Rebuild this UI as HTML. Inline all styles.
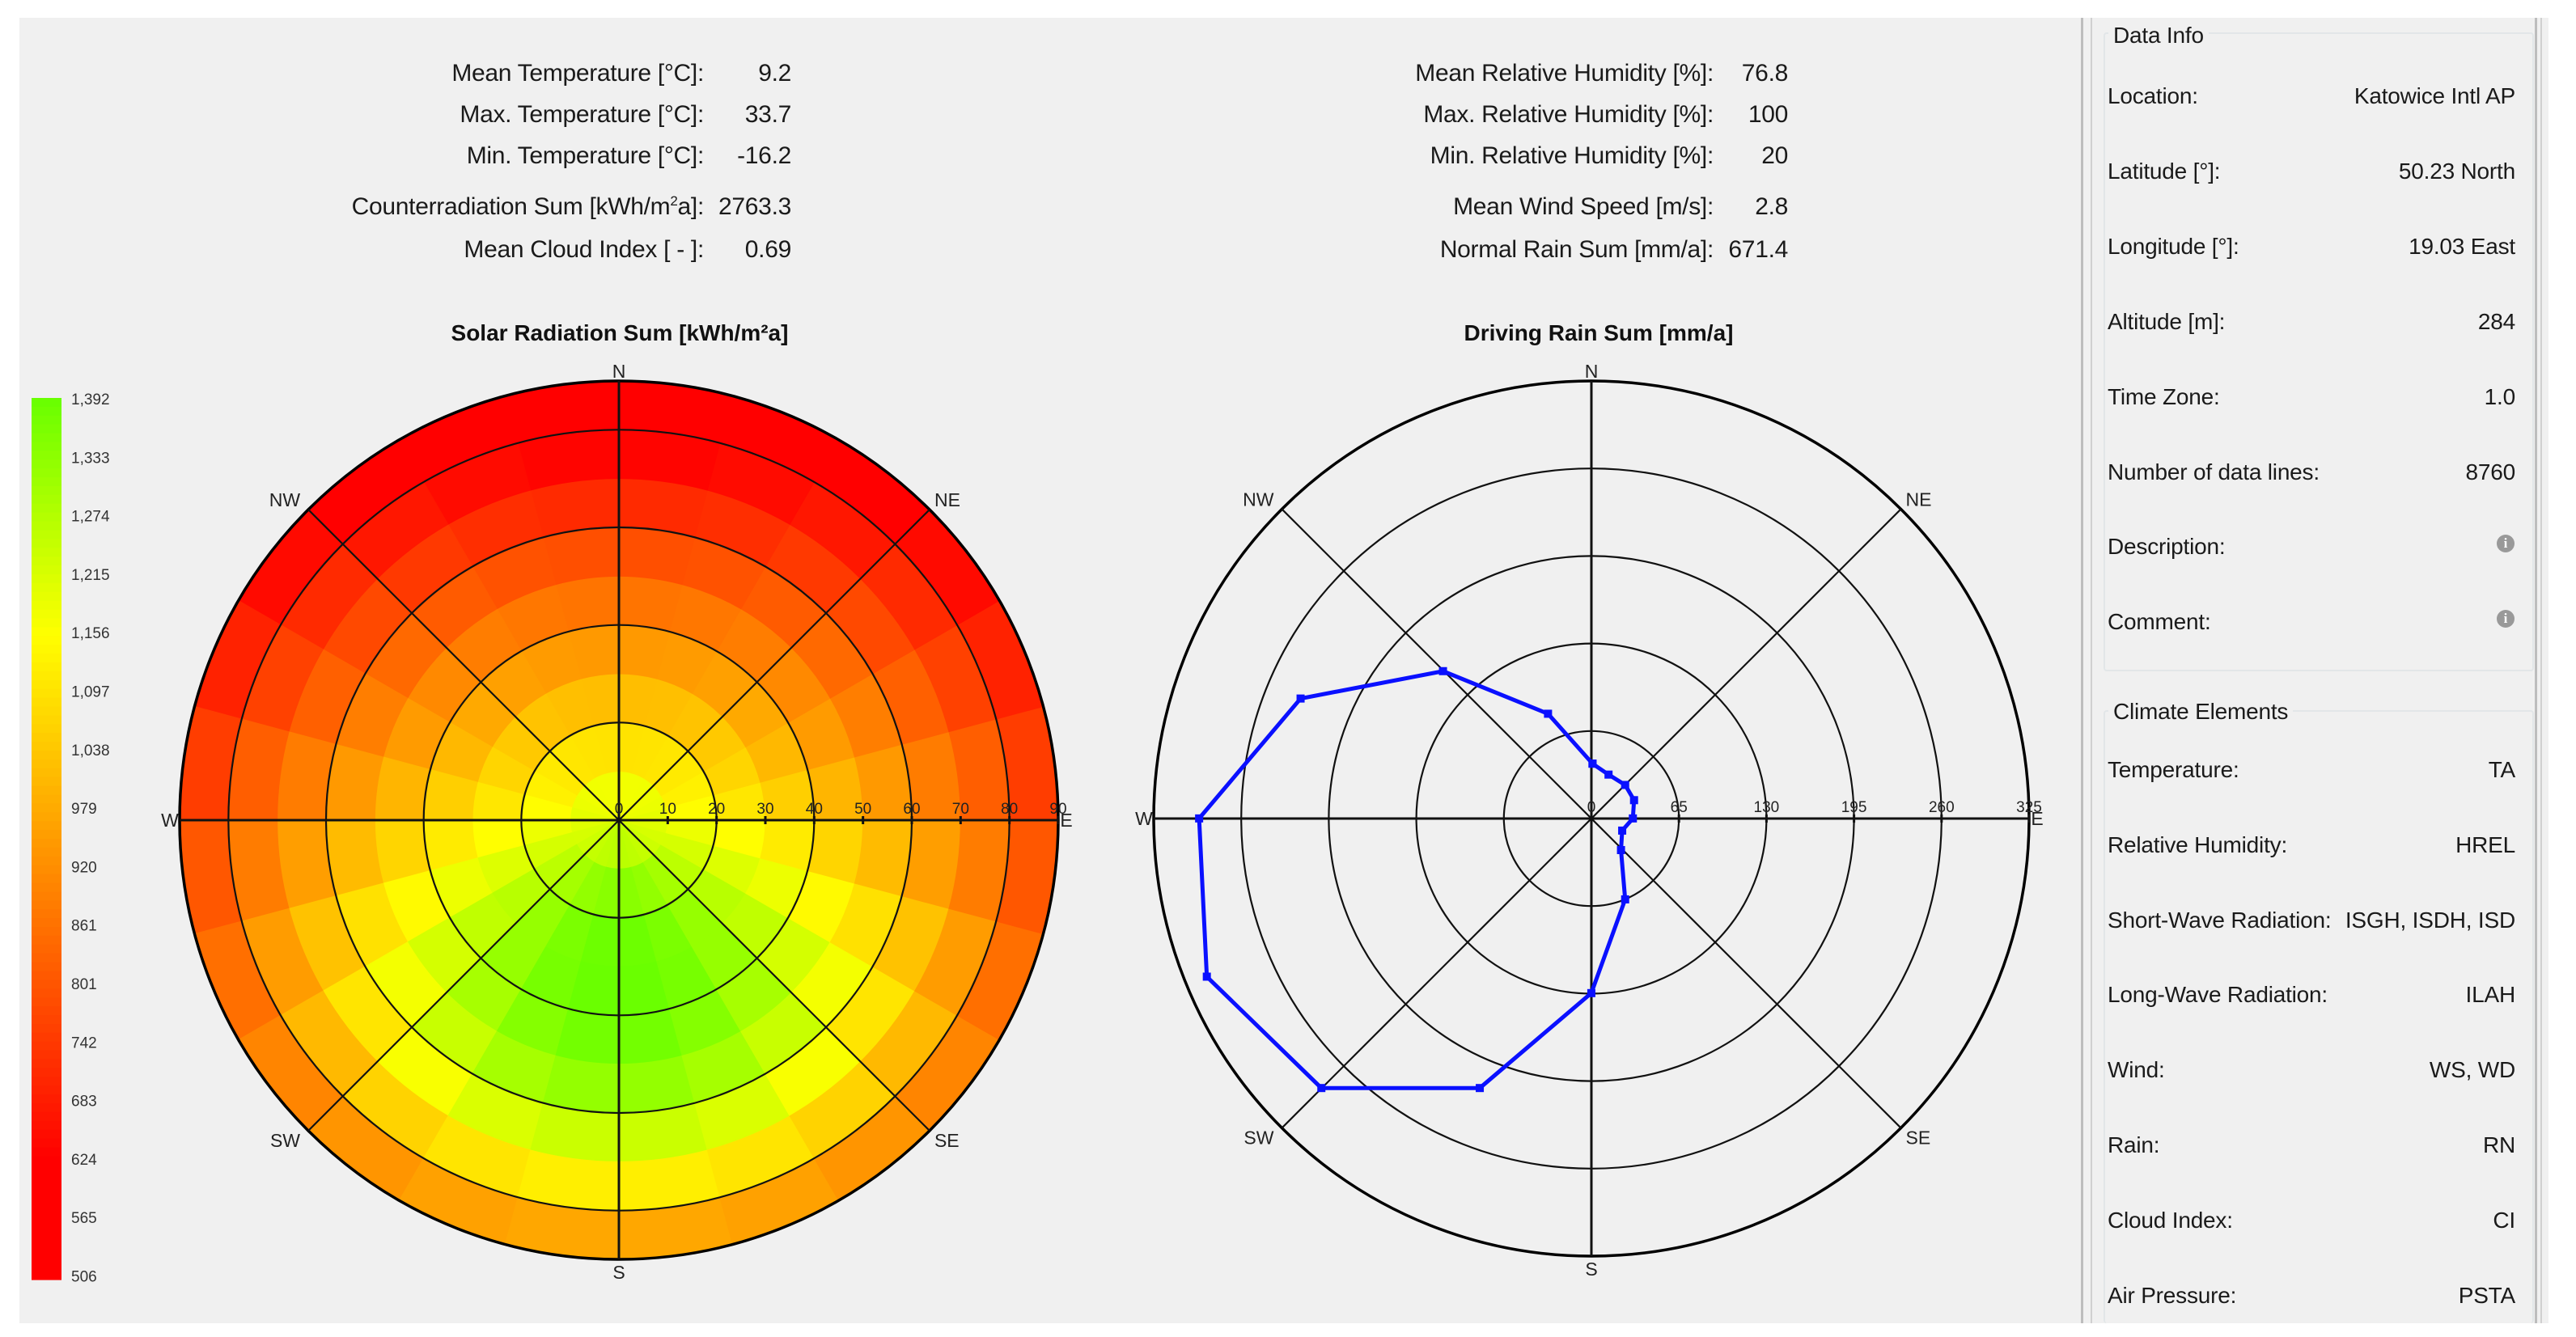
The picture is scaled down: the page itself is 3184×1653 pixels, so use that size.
<!DOCTYPE html>
<html><head><meta charset="utf-8">
<style>
html,body{margin:0;padding:0;background:#fff;}
body{width:3184px;height:1653px;position:relative;overflow:hidden;font-family:"Liberation Sans",sans-serif;color:#222;}
#panel{position:absolute;left:24px;top:22px;width:3126px;height:1614px;background:#f0f0f0;}
.st{position:absolute;font-size:30px;white-space:nowrap;letter-spacing:-0.3px;color:#1a1a1a}
.r{text-align:right}
.side{position:absolute;font-size:28px;letter-spacing:-0.2px;white-space:nowrap;color:#1a1a1a}
.vline{position:absolute;background:#bdbdbd;width:3px}
.box{position:absolute;border:2px solid #e2e6e8;border-radius:4px}
.title{position:absolute;font-weight:bold;font-size:28px;transform:translateX(-50%);white-space:nowrap;color:#111}
.info{position:absolute;width:22px;height:22px;border-radius:50%;background:#999;color:#fff;font-size:17px;font-weight:bold;text-align:center;line-height:22px;font-family:"Liberation Serif",serif}
</style></head><body>
<div id="panel"></div>
<div class="vline" style="left:2572px;top:22px;height:1614px"></div>
<div class="vline" style="left:2584px;top:22px;height:1614px;background:#d0d0d0;width:2px"></div>
<div class="vline" style="left:3133px;top:22px;height:1614px"></div>
<div class="vline" style="left:3140px;top:22px;height:1614px;background:#d0d0d0;width:2px"></div>

<div class="st r" style="right:2314px;top:74px">Mean Temperature [°C]:</div>
<div class="st r" style="right:2206px;top:74px">9.2</div>
<div class="st r" style="right:2314px;top:125px">Max. Temperature [°C]:</div>
<div class="st r" style="right:2206px;top:125px">33.7</div>
<div class="st r" style="right:2314px;top:176px">Min. Temperature [°C]:</div>
<div class="st r" style="right:2206px;top:176px">-16.2</div>
<div class="st r" style="right:2314px;top:239px">Counterradiation Sum [kWh/m<sup style="font-size:17px">2</sup>a]:</div>
<div class="st r" style="right:2206px;top:239px">2763.3</div>
<div class="st r" style="right:2314px;top:292px">Mean Cloud Index [ - ]:</div>
<div class="st r" style="right:2206px;top:292px">0.69</div>
<div class="st r" style="right:1066px;top:74px">Mean Relative Humidity [%]:</div>
<div class="st r" style="right:974px;top:74px">76.8</div>
<div class="st r" style="right:1066px;top:125px">Max. Relative Humidity [%]:</div>
<div class="st r" style="right:974px;top:125px">100</div>
<div class="st r" style="right:1066px;top:176px">Min. Relative Humidity [%]:</div>
<div class="st r" style="right:974px;top:176px">20</div>
<div class="st r" style="right:1066px;top:239px">Mean Wind Speed [m/s]:</div>
<div class="st r" style="right:974px;top:239px">2.8</div>
<div class="st r" style="right:1066px;top:292px">Normal Rain Sum [mm/a]:</div>
<div class="st r" style="right:974px;top:292px">671.4</div>

<div class="title" style="left:766px;top:396px">Solar Radiation Sum [kWh/m²a]</div>
<div class="title" style="left:1976px;top:396px">Driving Rain Sum [mm/a]</div>

<svg id="svg" width="3184" height="1653" style="position:absolute;left:0;top:0" xmlns="http://www.w3.org/2000/svg"></svg>

<div class="box" style="left:2600px;top:40px;width:528px;height:786px"></div>
<div class="side" style="left:2606px;top:28px;background:#f0f0f0;padding:0 6px">Data Info</div>
<div class="box" style="left:2600px;top:878px;width:528px;height:756px;border-bottom:none"></div>
<div class="side" style="left:2606px;top:864px;background:#f0f0f0;padding:0 6px">Climate Elements</div>
<div id="side"></div>

<script>
var NS="http://www.w3.org/2000/svg",svg=document.getElementById('svg');
function el(t,a,txt){var e=document.createElementNS(NS,t);for(var k in a)e.setAttribute(k,a[k]);if(txt!=null)e.textContent=txt;svg.appendChild(e);return e;}
function col(v){var h;if(v<=624)h=0;else if(v<1156)h=(v-624)/(1156-624)*60;else h=60+Math.min(1,(v-1156)/(1392-1156))*35;return 'hsl('+h.toFixed(1)+',100%,50%)';}
for(var i=0;i<100;i++){var v=1392-(1392-506)*i/99;el('rect',{x:39,y:492+i*10.9,width:37,height:11.5,fill:col(v)});}
var lv=['1,392','1,333','1,274','1,215','1,156','1,097','1,038','979','920','861','801','742','683','624','565','506'];
for(var i=0;i<16;i++){el('text',{x:88,y:500+i*72.3,'font-size':19,fill:'#333','font-family':'Liberation Sans'},lv[i]);}
var cx=765,cy=1014,R=543;
function val(u,A){var vS=1215+1000*u-1330*u*u,vN=1215-700*u,vE=1215-50*u-445*u*u;return vE+(vS-vN)/2*Math.cos(A)+((vS+vN)/2-vE)*Math.cos(2*A);}
var NR=9,NA=24;
for(var r=0;r<NR;r++)for(var a=0;a<NA;a++){
 var r0=R*r/NR,r1=R*(r+1)/NR,a0=a*2*Math.PI/NA,a1=(a+1)*2*Math.PI/NA;
 var u=(r+0.5)/NR,A=(a+0.5)*2*Math.PI/NA;
 function P(rr,aa){return [cx+rr*Math.sin(aa),cy+rr*Math.cos(aa)];}
 var p1=P(r0,a0),p2=P(r1,a0),p3=P(r1,a1),p4=P(r0,a1);
 el('path',{d:'M'+p1+'L'+p2+'A'+r1+','+r1+' 0 0 0 '+p3+'L'+p4+(r0>0?'A'+r0+','+r0+' 0 0 1 '+p1:'')+'Z',fill:col(val(u,A)),stroke:col(val(u,A)),'stroke-width':1});
}
function polarGrid(cx,cy,R,rings,labels,unitR){
 rings.forEach(function(rr){el('circle',{cx:cx,cy:cy,r:rr,fill:'none',stroke:'#111','stroke-width':2.2});});
 el('circle',{cx:cx,cy:cy,r:R,fill:'none',stroke:'#000','stroke-width':3.5});
 for(var k=0;k<4;k++){var an=k*Math.PI/4;el('line',{x1:cx-R*Math.cos(an),y1:cy-R*Math.sin(an),x2:cx+R*Math.cos(an),y2:cy+R*Math.sin(an),stroke:'#111','stroke-width':k%2==0?3:2.2});}
 var d=R*0.7071,f={'font-size':23,fill:'#222','font-family':'Liberation Sans'};
 function T(x,y,t,anc){var o=Object.assign({x:x,y:y,'text-anchor':anc||'middle'},f);el('text',o,t);}
 T(cx,cy-R-4,'N');T(cx,cy+R+24,'S');T(cx-R-12,cy+8,'W');T(cx+R+10,cy+8,'E');
 T(cx-d-10,cy-d-4,'NW','end');T(cx+d+6,cy-d-4,'NE','start');T(cx-d-10,cy+d+20,'SW','end');T(cx+d+6,cy+d+20,'SE','start');
 labels.forEach(function(l,i){var x=cx+unitR*i;el('text',{x:x,y:cy-8,'font-size':19,fill:'#222','text-anchor':'middle','font-family':'Liberation Sans'},l);el('line',{x1:x,y1:cy-5,x2:x,y2:cy+5,stroke:'#111','stroke-width':3});});
}
var u1=R/9;
polarGrid(cx,cy,R,[2*u1,4*u1,6*u1,8*u1],['0','10','20','30','40','50','60','70','80','90'],u1);
var cx2=1967,cy2=1012,R2=541,u2=R2/5;
polarGrid(cx2,cy2,R2,[u2,2*u2,3*u2,4*u2],['0','65','130','195','260','325'],u2);
var pts=[[775,670],[802,688],[830,705],[845,730],[843,760],[825,780],[823,812],[830,893],[773,1047],[585,1203],[318,1203],[125,1020],[112,760],[283,563],[523,518],[700,588],[775,670]];
var pp=pts.map(function(p){return [1400+p[0]/1.3635,440+p[1]/1.329];});
el('polyline',{points:pp.join(' '),fill:'none',stroke:'#0a10ff','stroke-width':5,'stroke-linejoin':'miter'});
pp.forEach(function(p){el('rect',{x:p[0]-5,y:p[1]-5,width:10,height:10,fill:'#0a10ff'});});
var rows1=[['Location:','Katowice Intl AP'],['Latitude [°]:','50.23 North'],['Longitude [°]:','19.03 East'],['Altitude [m]:','284'],['Time Zone:','1.0'],['Number of data lines:','8760'],['Description:',null],['Comment:',null]];
var rows2=[['Temperature:','TA'],['Relative Humidity:','HREL'],['Short-Wave Radiation:','ISGH, ISDH, ISD'],['Long-Wave Radiation:','ILAH'],['Wind:','WS, WD'],['Rain:','RN'],['Cloud Index:','CI'],['Air Pressure:','PSTA']];
var h='';
rows1.forEach(function(r,i){var y=103+i*92.9;h+='<div class="side" style="left:2605px;top:'+y+'px">'+r[0]+'</div>';
 if(r[1])h+='<div class="side" style="right:75px;top:'+y+'px;text-align:right">'+r[1]+'</div>';else h+='<div class="info" style="left:3086px;top:'+(y+1)+'px">i</div>';});
rows2.forEach(function(r,i){var y=936+i*92.8;h+='<div class="side" style="left:2605px;top:'+y+'px">'+r[0]+'</div><div class="side" style="right:75px;top:'+y+'px;text-align:right">'+r[1]+'</div>';});
document.getElementById('side').innerHTML=h;
</script>
</body></html>
